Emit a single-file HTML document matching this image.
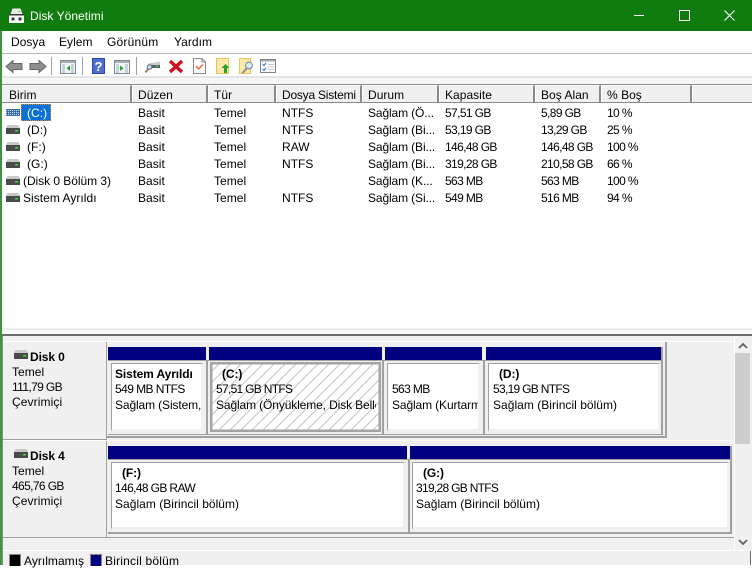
<!DOCTYPE html>
<html><head><meta charset="utf-8">
<style>
html,body{margin:0;padding:0}
body{width:752px;height:565px;position:relative;overflow:hidden;background:#fff;font-family:"Liberation Sans",sans-serif;font-size:12px;color:#000}
div,span,svg{position:absolute}
.t{white-space:nowrap;line-height:15px;letter-spacing:.03px}
.n{letter-spacing:-.62px}
.h{top:85px;height:17px;background:#f0f0f0;border-right:2px solid #8a8a8a;box-sizing:border-box;border-left:1px solid #fff;border-top:1px solid #fff}
.bar{background:#000080;height:13px}
.box{background:#fff;box-sizing:border-box;border-top:1px solid #a0a0a0;border-left:1px solid #a0a0a0;border-right:3px solid #f0f0f0;border-bottom:3px solid #f0f0f0}
.b{font-weight:bold;letter-spacing:-.1px}
.cl{overflow:hidden}
.s{letter-spacing:-.12px}
.f{letter-spacing:-.7px}
</style></head><body>
<div style="left:0;top:0;width:752px;height:31px;background:#107c10"></div>
<svg style="left:9px;top:8px" width="15" height="15" viewBox="0 0 15 15"><path d="M1.500 6 L3.500 .5 H11.500 L13.500 6Z" fill="#ececec"/><rect x="9.500" y="3" width="2" height="1" fill="#3ddc3d"/><rect x="0" y="6" width="15" height="9" rx="1" fill="#fff"/><rect x="0" y="6" width="15" height="1.500" fill="#3a3a3a"/><rect x="2.500" y="9.500" width="3" height="3" fill="#3a3a3a"/><rect x="9.500" y="9.500" width="3" height="3" fill="#3a3a3a"/></svg>
<div class="t" style="left:30px;top:9px;color:#fff">Disk Yönetimi</div>
<div style="left:634px;top:15px;width:10px;height:1px;background:#fff"></div>
<div style="left:679px;top:10px;width:9px;height:9px;border:1px solid #fff"></div>
<svg style="left:724px;top:10px" width="11" height="11"><path d="M.5 .5L10.500 10.500M10.500 .5L.5 10.500" stroke="#fff" stroke-width="1.100"/></svg>

<div style="left:0;top:31px;width:2px;height:534px;background:#3f9440"></div>

<div class="t" style="left:11px;top:35px">Dosya</div>
<div class="t" style="left:59px;top:35px">Eylem</div>
<div class="t" style="left:107px;top:35px;letter-spacing:.2px">Görünüm</div>
<div class="t" style="left:174px;top:35px">Yardım</div>
<div style="left:2px;top:53px;width:750px;height:1px;background:#b4b4bc"></div>

<svg style="left:5px;top:58px" width="42" height="17" viewBox="0 0 42 17">
<path d="M1 8.500L8 2.500V5.500H17V11.500H8V14.500Z" fill="#8f8f8f" stroke="#666" stroke-width="1"/>
<path d="M41 8.500L34 2.500V5.500H25V11.500H34V14.500Z" fill="#8f8f8f" stroke="#666" stroke-width="1"/>
</svg>
<div style="left:51px;top:57px;width:1px;height:18px;background:#a0a0a0"></div>
<svg style="left:60px;top:60px" width="16" height="14" viewBox="0 0 16 14"><rect x=".5" y=".5" width="15" height="13" fill="#f4f6f8" stroke="#7c8a90"/><rect x="1" y="1" width="14" height="2" fill="#a5b0b5"/><rect x="2" y="4" width="3" height="9" fill="#c8d4dc"/><rect x="11" y="4" width="3" height="9" fill="#c8d4dc"/><path d="M10 5.500V11L6.500 8.200Z" fill="#19a52b"/></svg>
<div style="left:82px;top:57px;width:1px;height:18px;background:#a0a0a0"></div>
<svg style="left:92px;top:58px" width="13" height="16" viewBox="0 0 13 16"><rect width="13" height="16" fill="#2c46a8"/><rect x="1" y="1" width="11" height="14" fill="#4f6fd0"/><text x="6.500" y="13" font-family="Liberation Sans" font-weight="bold" font-size="13" fill="#fff" text-anchor="middle">?</text></svg>
<svg style="left:114px;top:60px" width="16" height="14" viewBox="0 0 16 14"><rect x=".5" y=".5" width="15" height="13" fill="#f4f6f8" stroke="#7c8a90"/><rect x="1" y="1" width="14" height="2" fill="#a5b0b5"/><rect x="2" y="4" width="3" height="9" fill="#c8d4dc"/><rect x="11" y="4" width="3" height="9" fill="#c8d4dc"/><path d="M6 5.500V11L9.500 8.200Z" fill="#19a52b"/></svg>
<div style="left:136px;top:57px;width:1px;height:18px;background:#a0a0a0"></div>
<svg style="left:145px;top:60px" width="16" height="14" viewBox="0 0 16 14"><path d="M3 3.500L15 1.500V7L3 8.500Z" fill="#c8ccd0"/><path d="M4 5H15V8H4Z" fill="#5a6065"/><rect x="11" y="5.500" width="2" height="1.500" fill="#3ddc3d"/><circle cx="4.500" cy="7" r="2.300" fill="#bfe4f5" stroke="#667"/><path d="M3 9L.5 12.500" stroke="#8a6f50" stroke-width="1.600"/></svg>
<svg style="left:168px;top:58px" width="16" height="16" viewBox="0 0 16 16"><path d="M2 3L14 14M14 3L2 14" stroke="#d0101a" stroke-width="3.400"/></svg>
<svg style="left:193px;top:58px" width="13" height="16" viewBox="0 0 13 16"><path d="M.5 .5H9L12.500 4V15.500H.5Z" fill="#fff" stroke="#8a8a8a"/><path d="M9 .5V4H12.500" fill="none" stroke="#8a8a8a"/><path d="M3 8L5.500 11L10 6.500" fill="none" stroke="#e8622a" stroke-width="1.400"/></svg>
<svg style="left:216px;top:58px" width="14" height="16" viewBox="0 0 14 16"><rect x=".5" y=".5" width="12" height="15" fill="#fde9a8" stroke="#e6c65c"/><path d="M9.500 6L13.500 10H11V15H8V10H5.500Z" fill="#1fa51f"/></svg>
<svg style="left:239px;top:58px" width="15" height="16" viewBox="0 0 15 16"><rect x=".5" y=".5" width="11" height="15" fill="#fde9a8" stroke="#e6c65c"/><circle cx="10" cy="7.500" r="3.400" fill="#d8eef8" stroke="#78828a"/><path d="M7.500 10.500L3.500 15" stroke="#8a8a8a" stroke-width="1.800"/></svg>
<svg style="left:260px;top:59px" width="16" height="14" viewBox="0 0 16 14"><rect x=".5" y=".5" width="15" height="13" fill="#fff" stroke="#808488"/><rect x="1" y="1" width="14" height="1.500" fill="#a8acb0"/><path d="M2.500 5L4 6.500L6 4M2.500 10L4 11.500L6 9" fill="none" stroke="#2a78d8" stroke-width="1.100"/><path d="M8 5.500H14M8 8H14M8 10.500H14" stroke="#c0c4c8"/></svg>

<div style="left:2px;top:76px;width:750px;height:2px;background:#e4e4e4"></div>
<div style="left:2px;top:78px;width:750px;height:6px;background:#f6f6f6"></div>
<div style="left:2px;top:84px;width:750px;height:1px;background:#8a8a8a"></div>

<div class="h" style="left:2px;width:130px"></div>
<div class="h" style="left:132px;width:76px"></div>
<div class="h" style="left:208px;width:68px"></div>
<div class="h" style="left:276px;width:86px"></div>
<div class="h" style="left:362px;width:77px"></div>
<div class="h" style="left:439px;width:96px"></div>
<div class="h" style="left:535px;width:66px"></div>
<div class="h" style="left:601px;width:91px"></div>
<div class="h" style="left:692px;width:60px;border-right:0"></div>
<div style="left:2px;top:102px;width:750px;height:1px;background:#8a8a8a"></div>
<div class="t" style="left:9px;top:88px">Birim</div>
<div class="t" style="left:138px;top:88px">Düzen</div>
<div class="t" style="left:214px;top:88px">Tür</div>
<div class="t" style="left:282px;top:88px;letter-spacing:-.22px">Dosya Sistemi</div>
<div class="t" style="left:368px;top:88px">Durum</div>
<div class="t" style="left:445px;top:88px">Kapasite</div>
<div class="t" style="left:541px;top:88px">Boş Alan</div>
<div class="t" style="left:607px;top:88px">% Boş</div>

<div style="left:21px;top:104px;width:30px;height:17px;background:#0a72d6;outline:1px dotted #e88a20;outline-offset:-1px"></div>
<svg style="left:6px;top:109px" width="14" height="7"><rect width="14" height="7" fill="#3a6ea8"/><path d="M0 1.500H14M0 3.500H14M0 5.500H14" stroke="#cfe0f0" stroke-dasharray="1 1"/></svg>
<svg style="left:6px;top:125px" width="14" height="9"><path d="M1.500 0H12.500L14 3V9H0V3Z" fill="#c8c8c8"/><rect y="3" width="14" height="6" fill="#4a4a4a"/><rect x="9" y="5" width="3" height="1.500" fill="#3ddc3d"/></svg>
<svg style="left:6px;top:142px" width="14" height="9"><path d="M1.500 0H12.500L14 3V9H0V3Z" fill="#c8c8c8"/><rect y="3" width="14" height="6" fill="#4a4a4a"/><rect x="9" y="5" width="3" height="1.500" fill="#3ddc3d"/></svg>
<svg style="left:6px;top:159px" width="14" height="9"><path d="M1.500 0H12.500L14 3V9H0V3Z" fill="#c8c8c8"/><rect y="3" width="14" height="6" fill="#4a4a4a"/><rect x="9" y="5" width="3" height="1.500" fill="#3ddc3d"/></svg>
<svg style="left:6px;top:176px" width="14" height="9"><path d="M1.500 0H12.500L14 3V9H0V3Z" fill="#c8c8c8"/><rect y="3" width="14" height="6" fill="#4a4a4a"/><rect x="9" y="5" width="3" height="1.500" fill="#3ddc3d"/></svg>
<svg style="left:6px;top:193px" width="14" height="9"><path d="M1.500 0H12.500L14 3V9H0V3Z" fill="#c8c8c8"/><rect y="3" width="14" height="6" fill="#4a4a4a"/><rect x="9" y="5" width="3" height="1.500" fill="#3ddc3d"/></svg>

<div class="t" style="left:27px;top:106px;color:#fff">(C:)</div>
<div class="t" style="left:27px;top:123px">(D:)</div>
<div class="t" style="left:27px;top:140px">(F:)</div>
<div class="t" style="left:27px;top:157px">(G:)</div>
<div class="t" style="left:23px;top:174px;letter-spacing:-.05px">(Disk 0 Bölüm 3)</div>
<div class="t" style="left:23px;top:191px">Sistem Ayrıldı</div>

<div class="t" style="left:138px;top:106px">Basit</div><div class="t" style="left:214px;top:106px">Temel</div><div class="t" style="left:282px;top:106px">NTFS</div><div class="t s" style="left:368px;top:106px">Sağlam (Ö...</div><div class="t n" style="left:445px;top:106px">57,51 GB</div><div class="t n" style="left:541px;top:106px">5,89 GB</div><div class="t n" style="left:607px;top:106px">10 %</div>
<div class="t" style="left:138px;top:123px">Basit</div><div class="t" style="left:214px;top:123px">Temel</div><div class="t" style="left:282px;top:123px">NTFS</div><div class="t s" style="left:368px;top:123px">Sağlam (Bi...</div><div class="t n" style="left:445px;top:123px">53,19 GB</div><div class="t n" style="left:541px;top:123px">13,29 GB</div><div class="t n" style="left:607px;top:123px">25 %</div>
<div class="t" style="left:138px;top:140px">Basit</div><div class="t" style="left:214px;top:140px">Temel</div><div class="t" style="left:282px;top:140px">RAW</div><div class="t s" style="left:368px;top:140px">Sağlam (Bi...</div><div class="t n" style="left:445px;top:140px">146,48 GB</div><div class="t n" style="left:541px;top:140px">146,48 GB</div><div class="t n" style="left:607px;top:140px">100 %</div>
<div class="t" style="left:138px;top:157px">Basit</div><div class="t" style="left:214px;top:157px">Temel</div><div class="t" style="left:282px;top:157px">NTFS</div><div class="t s" style="left:368px;top:157px">Sağlam (Bi...</div><div class="t n" style="left:445px;top:157px">319,28 GB</div><div class="t n" style="left:541px;top:157px">210,58 GB</div><div class="t n" style="left:607px;top:157px">66 %</div>
<div class="t" style="left:138px;top:174px">Basit</div><div class="t" style="left:214px;top:174px">Temel</div><div class="t s" style="left:368px;top:174px">Sağlam (K...</div><div class="t n" style="left:445px;top:174px">563 MB</div><div class="t n" style="left:541px;top:174px">563 MB</div><div class="t n" style="left:607px;top:174px">100 %</div>
<div class="t" style="left:138px;top:191px">Basit</div><div class="t" style="left:214px;top:191px">Temel</div><div class="t" style="left:282px;top:191px">NTFS</div><div class="t s" style="left:368px;top:191px">Sağlam (Si...</div><div class="t n" style="left:445px;top:191px">549 MB</div><div class="t n" style="left:541px;top:191px">516 MB</div><div class="t n" style="left:607px;top:191px">94 %</div>

<div style="left:2px;top:328px;width:750px;height:3px;background:#f0f0f0"></div>
<div style="left:2px;top:331px;width:750px;height:3px;background:#fafafa"></div>
<div style="left:2px;top:334px;width:750px;height:2px;background:#6e6e6e"></div>
<div style="left:2px;top:336px;width:750px;height:214px;background:#f0f0f0"></div>
<div style="left:2px;top:336px;width:1px;height:229px;background:#8a8a8a"></div>
<div style="left:3px;top:341px;width:732px;height:1px;background:#fff"></div>

<div style="left:3px;top:342px;width:103px;height:97px;border-right:1px solid #a0a0a0"></div>
<div style="left:3px;top:439px;width:104px;height:1px;background:#a0a0a0"></div>
<div style="left:3px;top:440px;width:732px;height:1px;background:#fff"></div>
<div style="left:3px;top:537px;width:103px;height:1px;background:#a0a0a0"></div>
<div style="left:106px;top:441px;width:1px;height:97px;background:#a0a0a0"></div>

<svg style="left:14px;top:350px" width="14" height="9"><path d="M1.500 0H12.500L14 3V9H0V3Z" fill="#c8c8c8"/><rect y="3" width="14" height="6" fill="#4a4a4a"/><rect x="9" y="5" width="3" height="1.500" fill="#3ddc3d"/></svg>
<div class="t b" style="left:30px;top:350px">Disk 0</div>
<div class="t" style="left:12px;top:365px">Temel</div>
<div class="t n" style="left:12px;top:380px">111,79 GB</div>
<div class="t" style="left:12px;top:395px;letter-spacing:.1px">Çevrimiçi</div>
<svg style="left:14px;top:449px" width="14" height="9"><path d="M1.500 0H12.500L14 3V9H0V3Z" fill="#c8c8c8"/><rect y="3" width="14" height="6" fill="#4a4a4a"/><rect x="9" y="5" width="3" height="1.500" fill="#3ddc3d"/></svg>
<div class="t b" style="left:30px;top:449px">Disk 4</div>
<div class="t" style="left:12px;top:464px">Temel</div>
<div class="t n" style="left:12px;top:479px">465,76 GB</div>
<div class="t" style="left:12px;top:494px;letter-spacing:.1px">Çevrimiçi</div>

<!-- Disk 0 -->
<div style="left:107px;top:342px;width:558px;height:94px;border-right:2px solid #a0a0a0;border-bottom:2px solid #a0a0a0"></div>
<div class="bar" style="left:108px;top:347px;width:98px"></div>
<div class="bar" style="left:209px;top:347px;width:173px"></div>
<div class="bar" style="left:385px;top:347px;width:97px"></div>
<div class="bar" style="left:486px;top:347px;width:175px"></div>
<div style="left:661px;top:347px;width:2px;height:88px;background:#a0a0a0"></div>
<div style="left:108px;top:360px;width:553px;height:1px;background:#a0a0a0"></div>
<div style="left:206px;top:361px;width:2px;height:73px;background:#a0a0a0"></div>

<div class="box" style="left:111px;top:363px;width:93px;height:69px"></div>
<div class="t b" style="left:115px;top:367px">Sistem Ayrıldı</div>
<div class="t" style="left:115px;top:382px;letter-spacing:-.56px">549 MB NTFS</div>
<div class="t cl s" style="left:115px;top:398px;width:86px">Sağlam (Sistem, Etkin)</div>

<svg style="left:210px;top:362px" width="171" height="70"><defs><pattern id="hz" width="11" height="11" patternUnits="userSpaceOnUse"><path d="M-2 2L2 -2M0 11L11 0M9 13L13 9" stroke="#c4c4c4" stroke-width="1"/></pattern></defs><rect width="171" height="70" fill="#fff"/><rect width="171" height="70" fill="url(#hz)"/><rect x="1.250" y="1.250" width="168.500" height="67.500" fill="none" stroke="#a4a4a4" stroke-width="2.500"/></svg>
<div class="t b" style="left:222px;top:367px">(C:)</div>
<div class="t f" style="left:216px;top:382px">57,51 GB NTFS</div>
<div class="t cl s" style="left:216px;top:398px;width:160px">Sağlam (Önyükleme, Disk Belleği Dosyası)</div>

<div class="box" style="left:387px;top:363px;width:94px;height:69px"></div>
<div class="t n" style="left:392px;top:382px">563 MB</div>
<div class="t cl s" style="left:392px;top:398px;width:86px">Sağlam (Kurtarma Bölümü)</div>

<div class="box" style="left:488px;top:363px;width:173px;height:69px"></div>
<div class="t b" style="left:499px;top:367px">(D:)</div>
<div class="t f" style="left:493px;top:382px">53,19 GB NTFS</div>
<div class="t" style="left:493px;top:398px">Sağlam (Birincil bölüm)</div>
<div style="left:382px;top:361px;width:2px;height:73px;background:#a0a0a0"></div>
<div style="left:483px;top:361px;width:2px;height:73px;background:#a0a0a0"></div>
<div style="left:108px;top:434px;width:555px;height:1px;background:#a0a0a0"></div>

<!-- Disk 4 -->
<div class="bar" style="left:108px;top:446px;width:299px"></div>
<div class="bar" style="left:410px;top:446px;width:320px"></div>
<div style="left:730px;top:446px;width:2px;height:88px;background:#a0a0a0"></div>
<div style="left:108px;top:459px;width:622px;height:1px;background:#a0a0a0"></div>
<div style="left:108px;top:532px;width:624px;height:2px;background:#a0a0a0"></div>
<div style="left:408px;top:460px;width:2px;height:72px;background:#a0a0a0"></div>
<div class="box" style="left:111px;top:462px;width:295px;height:68px"></div>
<div class="t b" style="left:122px;top:466px">(F:)</div>
<div class="t" style="left:115px;top:481px;letter-spacing:-.63px">146,48 GB RAW</div>
<div class="t" style="left:115px;top:497px">Sağlam (Birincil bölüm)</div>
<div class="box" style="left:412px;top:462px;width:318px;height:68px"></div>
<div class="t b" style="left:423px;top:466px">(G:)</div>
<div class="t f" style="left:416px;top:481px">319,28 GB NTFS</div>
<div class="t" style="left:416px;top:497px">Sağlam (Birincil bölüm)</div>
<div style="left:107px;top:537px;width:628px;height:1px;background:#a0a0a0"></div>

<!-- scrollbar -->
<div style="left:734px;top:336px;width:1px;height:215px;background:#fff"></div>
<div style="left:735px;top:353px;width:15px;height:91px;background:#cdcdcd"></div>
<svg style="left:738px;top:342px" width="10" height="8"><path d="M1 6L5 2L9 6" fill="none" stroke="#606060" stroke-width="1.800"/></svg>
<svg style="left:738px;top:538px" width="10" height="8"><path d="M1 2L5 6L9 2" fill="none" stroke="#606060" stroke-width="1.800"/></svg>
<div style="left:3px;top:550px;width:749px;height:1px;background:#fff"></div>
<div style="left:750px;top:551px;width:1px;height:14px;background:#6e6e6e"></div>

<!-- legend -->
<div style="left:3px;top:551px;width:747px;height:14px;background:#f0f0f0"></div>
<div style="left:9px;top:554px;width:10px;height:11px;background:#000;border:1px solid #888;border-bottom:0"></div>
<div class="t" style="left:24px;top:554px">Ayrılmamış</div>
<div style="left:90px;top:554px;width:10px;height:11px;background:#000080;border:1px solid #888;border-bottom:0"></div>
<div class="t" style="left:105px;top:554px;letter-spacing:.2px">Birincil bölüm</div>
</body></html>
